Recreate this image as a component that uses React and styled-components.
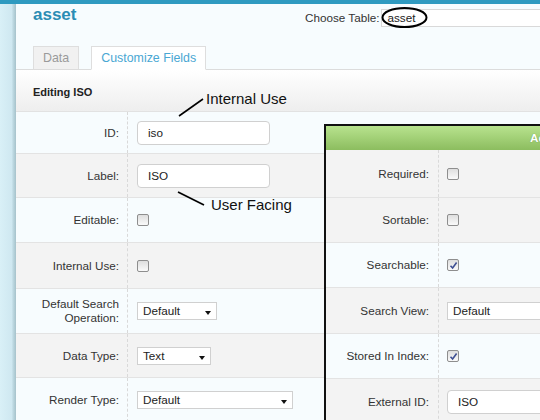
import React from 'react';
import styled, { createGlobalStyle } from 'styled-components';

const Global = createGlobalStyle`
  html, body { margin: 0; padding: 0; }
  body {
    width: 540px; height: 420px; overflow: hidden;
    background: #f7fcfe;
    font-family: "Liberation Sans", Arial, sans-serif;
    font-size: 11.7px; color: #333;
  }
`;

const Page = styled.div`
  position: relative;
  width: 540px; height: 420px; overflow: hidden;
  display: flex; flex-direction: column;
`;
const TopBar = styled.div`
  height: 4px; flex: none; background: #2f9ac0;
`;
const Shell = styled.div`
  flex: 1; display: flex; min-height: 0;
`;
const SideStripe = styled.div`
  width: 16px; flex: none;
  background: linear-gradient(to right, #d9f0f7 0%, #cfe8f1 72%, #b7d3dc 86%, #a6c2cb 100%);
`;
const Main = styled.div`
  flex: 1; min-width: 0; display: flex; flex-direction: column;
  background: #f7fcfe;
`;
const HeaderTop = styled.div`
  height: 42px; box-sizing: border-box; flex: none;
  padding: 1px 0 0 17px;
  display: grid; grid-template-columns: 272px auto; align-items: start;
`;
const Title = styled.div`
  font-size: 17px; font-weight: bold; line-height: 20px; color: #2b8db4;
`;
const ChooseGroup = styled.div`
  display: flex; align-items: center; margin-top: 4px; height: 18px; white-space: nowrap;
`;
const ChooseLabel = styled.span`
  line-height: 18px; color: #333;
`;
const ChooseInput = styled.div`
  margin-left: 1px; width: 300px; height: 18px; box-sizing: border-box;
  border: 1px solid #d9d9d9; background: #fff;
  padding-left: 6px; line-height: 16px; color: #222;
`;
const TabBar = styled.div`
  height: 24px; box-sizing: border-box; flex: none;
  border-bottom: 1px solid #dcdcdc;
  display: flex; align-items: flex-start; gap: 12px; padding-left: 17px;
`;
const Tab = styled.div`
  height: 24px; box-sizing: border-box;
  border: 1px solid #dedede;
  border-bottom-color: ${p => (p.$active ? '#ffffff' : '#dcdcdc')};
  background: ${p => (p.$active ? '#ffffff' : '#f1f1f1')};
  color: ${p => (p.$active ? '#4aa7d3' : '#9a9a9a')};
  padding: 0 9px; line-height: 22px; font-size: 12.4px;
`;
const Content = styled.div`
  flex: 1; background: #fff; display: flex; flex-direction: column;
`;
const EditHeader = styled.div`
  height: 42px; box-sizing: border-box; flex: none;
  border-bottom: 1px solid #e2e2e2;
  background: linear-gradient(#ffffff, #eeeeee);
  padding: 15px 17px 0;
  font-weight: bold; font-size: 11px; line-height: 14px; color: #222;
`;
const Row = styled.div`
  display: grid; grid-template-columns: ${p => p.$label}px 1fr;
  height: ${p => p.$h}px; box-sizing: border-box; flex: none;
  border-bottom: 1px solid #e3e3e3;
  background: ${p => (p.$alt ? '#f3f3f3' : '#f7fcfe')};
`;
const LabelCell = styled.div`
  display: flex; align-items: center; justify-content: flex-end;
  text-align: right; padding-right: ${p => p.$pad}px;
  border-right: 1px dashed #d9d9d9;
  line-height: 14px; color: #333;
`;
const ValueCell = styled.div`
  display: flex; align-items: center; padding-left: ${p => p.$pad}px;
`;
const TextInput = styled.div`
  width: ${p => p.$w}px; height: 24px; box-sizing: border-box; flex: none;
  border: 1px solid #d0d0d0; border-radius: 4px; background: #fff;
  padding-left: 10px; line-height: 22px; color: #222;
`;
const Box = styled.span`
  position: relative; width: 12px; height: 12px; box-sizing: border-box; flex: none;
  border: 1px solid #8e8e8e; border-radius: 2px;
  background: linear-gradient(#dedede, #fafafa);
  display: flex; align-items: center; justify-content: center;
`;
const Select = styled.div`
  position: relative; display: flex; align-items: center; flex: none;
  width: ${p => p.$w}px; height: 18px; box-sizing: border-box;
  border: 1px solid #d0d0d0; background: #fff;
  padding-left: 5px; color: #222; line-height: 16px;
  &::after {
    content: ""; position: absolute; right: 5px; top: 50%; margin-top: 0px;
    border-left: 3px solid transparent; border-right: 3px solid transparent;
    border-top: 4px solid #111;
  }
`;
const Panel = styled.div`
  position: absolute; left: 324px; top: 124px; width: 520px; height: 320px;
  border-top: 2px solid #111; border-left: 2px solid #111;
  background: #fff; display: flex; flex-direction: column;
`;
const PanelHeader = styled.div`
  height: 24px; flex: none;
  background: linear-gradient(#b8e38e, #8cbd5f);
  color: #fff; font-weight: bold; line-height: 24px;
  padding-left: 204px; text-shadow: 0 0 1px rgba(60, 110, 30, 0.6);
`;
const Overlay = styled.svg`
  position: absolute; left: 0; top: 0; pointer-events: none;
`;
const Note = styled.div`
  position: absolute; left: ${p => p.$x}px; top: ${p => p.$y}px;
  font-size: 15px; line-height: 16px; color: #111; white-space: nowrap;
`;

function Check({ on }) {
  return (
    <Box>
      {on && (
        <svg width="9" height="9" viewBox="0 0 9 9">
          <path d="M1.5 4.8 L3.6 7 L7.6 1.6" fill="none" stroke="#3e4f92" strokeWidth="1.6" />
        </svg>
      )}
    </Box>
  );
}

const leftRows = [
  { label: 'ID:', h: 42, v: <TextInput $w={133}>iso</TextInput> },
  { label: 'Label:', h: 44, alt: true, v: <TextInput $w={133}>ISO</TextInput> },
  { label: 'Editable:', h: 45, v: <Check /> },
  { label: 'Internal Use:', h: 46, alt: true, v: <Check /> },
  { label: <>Default Search<br />Operation:</>, h: 45, v: <Select $w={80}>Default</Select> },
  { label: 'Data Type:', h: 44, alt: true, v: <Select $w={74}>Text</Select> },
  { label: 'Render Type:', h: 45, v: <Select $w={156}>Default</Select> },
];

const rightRows = [
  { label: 'Required:', h: 48, alt: true, v: <Check /> },
  { label: 'Sortable:', h: 45, alt: true, v: <Check /> },
  { label: 'Searchable:', h: 45, v: <Check on /> },
  { label: 'Search View:', h: 46, alt: true, v: <Select $w={220}>Default</Select> },
  { label: 'Stored In Index:', h: 45, v: <Check on /> },
  { label: 'External ID:', h: 46, alt: true, v: <TextInput $w={220}>ISO</TextInput> },
];

export default function App() {
  return (
    <>
      <Global />
      <Page>
        <TopBar />
        <Shell>
          <SideStripe />
          <Main>
            <HeaderTop>
              <Title>asset</Title>
              <ChooseGroup>
                <ChooseLabel>Choose Table:</ChooseLabel>
                <ChooseInput>asset</ChooseInput>
              </ChooseGroup>
            </HeaderTop>
            <TabBar>
              <Tab>Data</Tab>
              <Tab $active>Customize Fields</Tab>
            </TabBar>
            <Content>
              <EditHeader>Editing ISO</EditHeader>
              {leftRows.map((r, i) => (
                <Row key={i} $h={r.h} $alt={r.alt} $label={112}>
                  <LabelCell $pad={8}>{r.label}</LabelCell>
                  <ValueCell $pad={9}>{r.v}</ValueCell>
                </Row>
              ))}
            </Content>
          </Main>
        </Shell>

        <Panel>
          <PanelHeader>Advanced Options</PanelHeader>
          {rightRows.map((r, i) => (
            <Row key={i} $h={r.h} $alt={r.alt} $label={113}>
              <LabelCell $pad={9}>{r.label}</LabelCell>
              <ValueCell $pad={8}>{r.v}</ValueCell>
            </Row>
          ))}
        </Panel>

        <Overlay width="540" height="420" viewBox="0 0 540 420">
          <ellipse cx="404.5" cy="17.5" rx="22" ry="9.5" fill="none" stroke="#000" strokeWidth="2" />
          <line x1="179" y1="116" x2="203" y2="99" stroke="#000" strokeWidth="1.6" />
          <line x1="178" y1="192" x2="204" y2="205" stroke="#000" strokeWidth="1.6" />
        </Overlay>
        <Note $x={206} $y={91}>Internal Use</Note>
        <Note $x={211} $y={197}>User Facing</Note>
      </Page>
    </>
  );
}
